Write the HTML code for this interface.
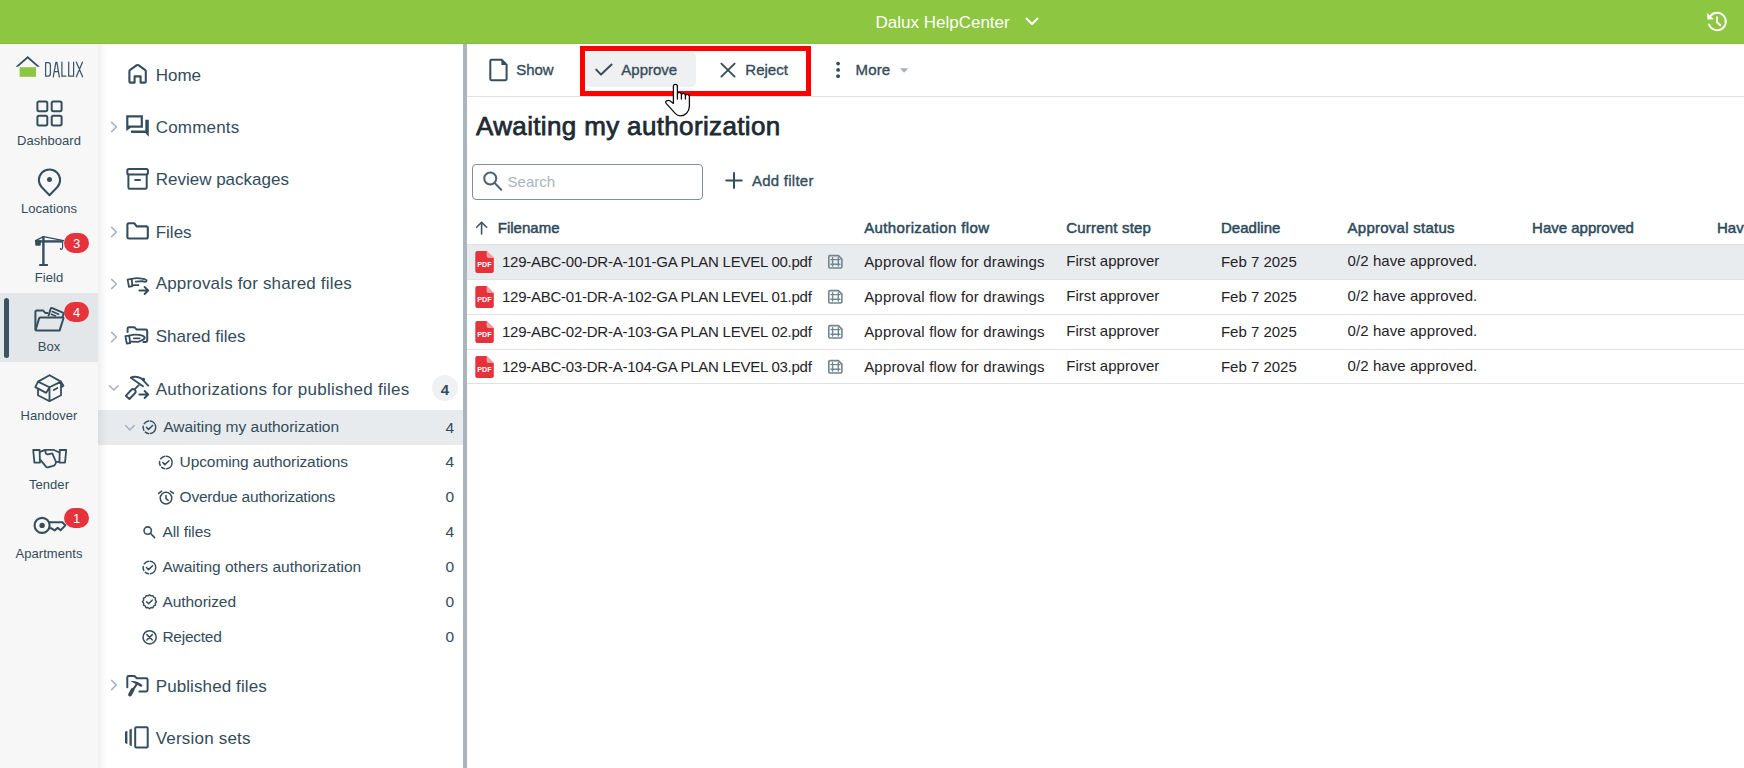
<!DOCTYPE html>
<html><head><meta charset="utf-8"><style>
html,body{margin:0;padding:0;width:1744px;height:768px;overflow:hidden;background:#fff;position:relative;font-family:"Liberation Sans", sans-serif}
.t{position:absolute;white-space:nowrap}
#ic{position:absolute;left:0;top:0}
</style></head><body>
<div style="position:absolute;left:0px;top:0px;width:1744px;height:44px;background:#8dc641"></div>
<div style="position:absolute;left:0px;top:43px;width:1744px;height:1px;background:#88bf3a"></div>
<div class="t" style="left:875.5px;top:13.61px;font-size:17px;line-height:17px;font-weight:400;color:#fff;">Dalux HelpCenter</div>
<div style="position:absolute;left:0px;top:44px;width:98px;height:724px;background:#f7f7f7"></div>
<div style="position:absolute;left:0px;top:293px;width:98px;height:69px;background:#e3e7ea"></div>
<div style="position:absolute;left:4px;top:298px;width:5px;height:59.5px;background:#3a5363;border-radius:2.5px"></div>
<div class="t" style="left:-151px;width:400px;text-align:center;top:134.20px;font-size:13px;line-height:13px;font-weight:400;color:#334c5b;letter-spacing:0.05px;">Dashboard</div>
<div class="t" style="left:-151px;width:400px;text-align:center;top:202.40px;font-size:13px;line-height:13px;font-weight:400;color:#334c5b;letter-spacing:0.05px;">Locations</div>
<div class="t" style="left:-151px;width:400px;text-align:center;top:271.20px;font-size:13px;line-height:13px;font-weight:400;color:#334c5b;letter-spacing:0.05px;">Field</div>
<div class="t" style="left:-151px;width:400px;text-align:center;top:340.30px;font-size:13px;line-height:13px;font-weight:400;color:#334c5b;letter-spacing:0.05px;">Box</div>
<div class="t" style="left:-151px;width:400px;text-align:center;top:408.80px;font-size:13px;line-height:13px;font-weight:400;color:#334c5b;letter-spacing:0.05px;">Handover</div>
<div class="t" style="left:-151px;width:400px;text-align:center;top:477.50px;font-size:13px;line-height:13px;font-weight:400;color:#334c5b;letter-spacing:0.05px;">Tender</div>
<div class="t" style="left:-151px;width:400px;text-align:center;top:546.80px;font-size:13px;line-height:13px;font-weight:400;color:#334c5b;letter-spacing:0.05px;">Apartments</div>
<div style="position:absolute;left:64px;top:233px;width:25px;height:20px;background:#e5323b;border-radius:10px"></div>
<div class="t" style="left:-123.5px;width:400px;text-align:center;top:237.20px;font-size:13px;line-height:13px;font-weight:400;color:#fff;">3</div>
<div style="position:absolute;left:64px;top:302px;width:25px;height:20px;background:#e5323b;border-radius:10px"></div>
<div class="t" style="left:-123.5px;width:400px;text-align:center;top:306.20px;font-size:13px;line-height:13px;font-weight:400;color:#fff;">4</div>
<div style="position:absolute;left:64px;top:508px;width:25px;height:20px;background:#e5323b;border-radius:10px"></div>
<div class="t" style="left:-123.5px;width:400px;text-align:center;top:512.20px;font-size:13px;line-height:13px;font-weight:400;color:#fff;">1</div>
<div style="position:absolute;left:463px;top:44px;width:4px;height:724px;background:#abb5bc"></div>
<div class="t" style="left:155.7px;top:66.51px;font-size:17px;line-height:17px;font-weight:400;color:#334c5b;">Home</div>
<div class="t" style="left:155.7px;top:119.01px;font-size:17px;line-height:17px;font-weight:400;color:#334c5b;letter-spacing:0.2px;">Comments</div>
<div class="t" style="left:155.7px;top:170.91px;font-size:17px;line-height:17px;font-weight:400;color:#334c5b;">Review packages</div>
<div class="t" style="left:155.7px;top:223.51px;font-size:17px;line-height:17px;font-weight:400;color:#334c5b;">Files</div>
<div class="t" style="left:155.7px;top:275.31px;font-size:17px;line-height:17px;font-weight:400;color:#334c5b;letter-spacing:0.17px;">Approvals for shared files</div>
<div class="t" style="left:155.7px;top:328.01px;font-size:17px;line-height:17px;font-weight:400;color:#334c5b;">Shared files</div>
<div class="t" style="left:155.7px;top:380.61px;font-size:17px;line-height:17px;font-weight:400;color:#334c5b;letter-spacing:0.27px;">Authorizations for published files</div>
<div class="t" style="left:155.7px;top:677.61px;font-size:17px;line-height:17px;font-weight:400;color:#334c5b;letter-spacing:0.1px;">Published files</div>
<div class="t" style="left:155.7px;top:730.01px;font-size:17px;line-height:17px;font-weight:400;color:#334c5b;letter-spacing:0.2px;">Version sets</div>
<div style="position:absolute;left:98px;top:410px;width:365px;height:35px;background:#e8ebee"></div>
<div style="position:absolute;left:98px;top:44px;width:9px;height:724px;background:linear-gradient(to right,rgba(0,0,0,0.058),rgba(0,0,0,0))"></div>
<div class="t" style="left:163.2px;top:419.38px;font-size:15.5px;line-height:15.5px;font-weight:400;color:#334c5b;letter-spacing:-0.01999999999999999px;">Awaiting my authorization</div>
<div class="t" style="right:1290px;top:419.58px;font-size:15.5px;line-height:15.5px;font-weight:400;color:#334c5b;">4</div>
<div class="t" style="left:179.6px;top:454.18px;font-size:15.5px;line-height:15.5px;font-weight:400;color:#334c5b;letter-spacing:-0.09999999999999999px;">Upcoming authorizations</div>
<div class="t" style="right:1290px;top:454.38px;font-size:15.5px;line-height:15.5px;font-weight:400;color:#334c5b;">4</div>
<div class="t" style="left:179.6px;top:488.78px;font-size:15.5px;line-height:15.5px;font-weight:400;color:#334c5b;letter-spacing:-0.22px;">Overdue authorizations</div>
<div class="t" style="right:1290px;top:488.98px;font-size:15.5px;line-height:15.5px;font-weight:400;color:#334c5b;">0</div>
<div class="t" style="left:162.4px;top:524.18px;font-size:15.5px;line-height:15.5px;font-weight:400;color:#334c5b;letter-spacing:-0.04999999999999999px;">All files</div>
<div class="t" style="right:1290px;top:524.38px;font-size:15.5px;line-height:15.5px;font-weight:400;color:#334c5b;">4</div>
<div class="t" style="left:162.4px;top:559.18px;font-size:15.5px;line-height:15.5px;font-weight:400;color:#334c5b;">Awaiting others authorization</div>
<div class="t" style="right:1290px;top:559.38px;font-size:15.5px;line-height:15.5px;font-weight:400;color:#334c5b;">0</div>
<div class="t" style="left:162.4px;top:593.68px;font-size:15.5px;line-height:15.5px;font-weight:400;color:#334c5b;letter-spacing:-0.04999999999999999px;">Authorized</div>
<div class="t" style="right:1290px;top:593.88px;font-size:15.5px;line-height:15.5px;font-weight:400;color:#334c5b;">0</div>
<div class="t" style="left:162.4px;top:628.58px;font-size:15.5px;line-height:15.5px;font-weight:400;color:#334c5b;letter-spacing:-0.25px;">Rejected</div>
<div class="t" style="right:1290px;top:628.78px;font-size:15.5px;line-height:15.5px;font-weight:400;color:#334c5b;">0</div>
<div style="position:absolute;left:432px;top:375px;width:26px;height:26px;background:#eff1f3;border-radius:13px"></div>
<div class="t" style="left:245px;width:400px;text-align:center;top:381.80px;font-size:15px;line-height:15px;font-weight:700;color:#334c5b;">4</div>
<div style="position:absolute;left:467px;top:96px;width:1277px;height:1px;background:#dde2e6"></div>
<div style="position:absolute;left:586px;top:52px;width:110px;height:34.5px;background:#eff0f2;border-radius:5px"></div>
<div class="t" style="left:516.3px;top:62.20px;font-size:15px;line-height:15px;font-weight:400;color:#334c5b;letter-spacing:-0.1px;-webkit-text-stroke:0.35px currentColor;">Show</div>
<div class="t" style="left:621.3px;top:62.20px;font-size:15px;line-height:15px;font-weight:400;color:#334c5b;-webkit-text-stroke:0.35px currentColor;">Approve</div>
<div class="t" style="left:745.3px;top:62.20px;font-size:15px;line-height:15px;font-weight:400;color:#334c5b;-webkit-text-stroke:0.35px currentColor;">Reject</div>
<div class="t" style="left:855.6px;top:62.20px;font-size:15px;line-height:15px;font-weight:400;color:#334c5b;letter-spacing:0.1px;-webkit-text-stroke:0.35px currentColor;">More</div>
<div class="t" style="left:476px;top:112.99px;font-size:26px;line-height:26px;font-weight:400;color:#1d2a33;letter-spacing:0.35px;-webkit-text-stroke:0.75px currentColor;">Awaiting my authorization</div>
<div style="position:absolute;left:471.5px;top:163.5px;width:231px;height:36px;border:1px solid #7f909b;border-radius:4px;box-sizing:border-box"></div>
<div class="t" style="left:507.6px;top:174.00px;font-size:15px;line-height:15px;font-weight:400;color:#a9b5be;">Search</div>
<div class="t" style="left:752px;top:173.10px;font-size:15px;line-height:15px;font-weight:400;color:#334c5b;letter-spacing:0.25px;-webkit-text-stroke:0.35px currentColor;">Add filter</div>
<div class="t" style="left:497.8px;top:220.10px;font-size:15px;line-height:15px;font-weight:400;color:#2d4a5c;-webkit-text-stroke:0.5px currentColor;">Filename</div>
<div class="t" style="left:864.2px;top:220.10px;font-size:15px;line-height:15px;font-weight:400;color:#2d4a5c;letter-spacing:0.38px;-webkit-text-stroke:0.5px currentColor;">Authorization flow</div>
<div class="t" style="left:1066.2px;top:220.10px;font-size:15px;line-height:15px;font-weight:400;color:#2d4a5c;letter-spacing:0.2px;-webkit-text-stroke:0.5px currentColor;">Current step</div>
<div class="t" style="left:1220.9px;top:220.10px;font-size:15px;line-height:15px;font-weight:400;color:#2d4a5c;letter-spacing:0.05px;-webkit-text-stroke:0.5px currentColor;">Deadline</div>
<div class="t" style="left:1347.6px;top:220.10px;font-size:15px;line-height:15px;font-weight:400;color:#2d4a5c;letter-spacing:0.25px;-webkit-text-stroke:0.5px currentColor;">Approval status</div>
<div class="t" style="left:1532.1px;top:220.10px;font-size:15px;line-height:15px;font-weight:400;color:#2d4a5c;-webkit-text-stroke:0.5px currentColor;">Have approved</div>
<div class="t" style="left:1717px;top:220.10px;font-size:15px;line-height:15px;font-weight:400;color:#2d4a5c;-webkit-text-stroke:0.5px currentColor;">Hav</div>
<div style="position:absolute;left:467px;top:245px;width:1277px;height:34px;background:#e9ecef"></div>
<div style="position:absolute;left:467px;top:244px;width:1277px;height:1px;background:#dde2e5"></div>
<div style="position:absolute;left:467px;top:279px;width:1277px;height:1px;background:#dde2e5"></div>
<div style="position:absolute;left:467px;top:314px;width:1277px;height:1px;background:#dde2e5"></div>
<div style="position:absolute;left:467px;top:349px;width:1277px;height:1px;background:#dde2e5"></div>
<div style="position:absolute;left:467px;top:383px;width:1277px;height:1px;background:#dde2e5"></div>
<div class="t" style="left:502px;top:254.00px;font-size:15px;line-height:15px;font-weight:400;color:#1f2328;letter-spacing:-0.25px;">129-ABC-00-DR-A-101-GA PLAN LEVEL 00.pdf</div>
<div class="t" style="left:864.2px;top:254.00px;font-size:15px;line-height:15px;font-weight:400;color:#1f2328;letter-spacing:0.18px;">Approval flow for drawings</div>
<div class="t" style="left:1066.2px;top:253.00px;font-size:15px;line-height:15px;font-weight:400;color:#1f2328;letter-spacing:0.05px;">First approver</div>
<div class="t" style="left:1220.9px;top:254.00px;font-size:15px;line-height:15px;font-weight:400;color:#1f2328;">Feb 7 2025</div>
<div class="t" style="left:1347.6px;top:253.00px;font-size:15px;line-height:15px;font-weight:400;color:#1f2328;letter-spacing:0.07px;">0/2 have approved.</div>
<div class="t" style="left:502px;top:289.00px;font-size:15px;line-height:15px;font-weight:400;color:#1f2328;letter-spacing:-0.25px;">129-ABC-01-DR-A-102-GA PLAN LEVEL 01.pdf</div>
<div class="t" style="left:864.2px;top:289.00px;font-size:15px;line-height:15px;font-weight:400;color:#1f2328;letter-spacing:0.18px;">Approval flow for drawings</div>
<div class="t" style="left:1066.2px;top:288.00px;font-size:15px;line-height:15px;font-weight:400;color:#1f2328;letter-spacing:0.05px;">First approver</div>
<div class="t" style="left:1220.9px;top:289.00px;font-size:15px;line-height:15px;font-weight:400;color:#1f2328;">Feb 7 2025</div>
<div class="t" style="left:1347.6px;top:288.00px;font-size:15px;line-height:15px;font-weight:400;color:#1f2328;letter-spacing:0.07px;">0/2 have approved.</div>
<div class="t" style="left:502px;top:324.00px;font-size:15px;line-height:15px;font-weight:400;color:#1f2328;letter-spacing:-0.25px;">129-ABC-02-DR-A-103-GA PLAN LEVEL 02.pdf</div>
<div class="t" style="left:864.2px;top:324.00px;font-size:15px;line-height:15px;font-weight:400;color:#1f2328;letter-spacing:0.18px;">Approval flow for drawings</div>
<div class="t" style="left:1066.2px;top:323.00px;font-size:15px;line-height:15px;font-weight:400;color:#1f2328;letter-spacing:0.05px;">First approver</div>
<div class="t" style="left:1220.9px;top:324.00px;font-size:15px;line-height:15px;font-weight:400;color:#1f2328;">Feb 7 2025</div>
<div class="t" style="left:1347.6px;top:323.00px;font-size:15px;line-height:15px;font-weight:400;color:#1f2328;letter-spacing:0.07px;">0/2 have approved.</div>
<div class="t" style="left:502px;top:359.00px;font-size:15px;line-height:15px;font-weight:400;color:#1f2328;letter-spacing:-0.25px;">129-ABC-03-DR-A-104-GA PLAN LEVEL 03.pdf</div>
<div class="t" style="left:864.2px;top:359.00px;font-size:15px;line-height:15px;font-weight:400;color:#1f2328;letter-spacing:0.18px;">Approval flow for drawings</div>
<div class="t" style="left:1066.2px;top:358.00px;font-size:15px;line-height:15px;font-weight:400;color:#1f2328;letter-spacing:0.05px;">First approver</div>
<div class="t" style="left:1220.9px;top:359.00px;font-size:15px;line-height:15px;font-weight:400;color:#1f2328;">Feb 7 2025</div>
<div class="t" style="left:1347.6px;top:358.00px;font-size:15px;line-height:15px;font-weight:400;color:#1f2328;letter-spacing:0.07px;">0/2 have approved.</div>
<svg id="ic" width="1744" height="768" viewBox="0 0 1744 768">
<path d="M1026.5 18.5 L1032 24 L1037.5 18.5" fill="none" stroke="#fff" stroke-width="2" stroke-linecap="round" stroke-linejoin="round" stroke-linecap="butt"/>
<path d="M1709 24.5 A8.7 8.7 0 1 0 1710.6 15.8" fill="none" stroke="#fff" stroke-width="1.9" stroke-linecap="round" stroke-linejoin="round" stroke-linecap="butt"/>
<path d="M1707.2 13 L1707.4 19.5 L1713.8 19.3 Z" fill="#fff"/>
<path d="M1717 17.2 V22.2 L1720.3 25.3" fill="none" stroke="#fff" stroke-width="1.9" stroke-linecap="round" stroke-linejoin="round" stroke-linecap="butt"/>
<path d="M15.6 66.8 L27.7 56 L39.8 66.8 L37.2 66.8 L27.7 58.6 L18.2 66.8 Z" fill="#354e5e"/>
<path d="M19.6 67.2 H36 V76.8 H19.6 Z" fill="#8dc641"/>
<path d="M45.6 62.6 V76.2 H48.2 Q50.4 76.2 50.4 73.6 V65.2 Q50.4 62.6 48.2 62.6 Z M53.3 76.8 L55.9 62.4 H56.9 L59.3 76.8 M54.3 71.6 H58.4 M61.9 62.2 V76.2 H65.9 M68.7 62.2 V76.2 H73.6 V62.2 M76.4 62.2 L82.6 76.8 M82.4 62.2 L76.4 76.8" fill="none" stroke="#3d5666" stroke-width="1.25" stroke-linecap="round" stroke-linejoin="round" stroke-linecap="butt" stroke-linejoin="miter"/>
<rect x="37.4" y="101.5" width="9.9" height="9.7" rx="1.6" fill="none" stroke="#354e5e" stroke-width="2"/>
<rect x="51.7" y="101.5" width="9.9" height="9.7" rx="1.6" fill="none" stroke="#354e5e" stroke-width="2"/>
<rect x="37.4" y="115.7" width="9.9" height="9.7" rx="1.6" fill="none" stroke="#354e5e" stroke-width="2"/>
<rect x="51.7" y="115.7" width="9.9" height="9.7" rx="1.6" fill="none" stroke="#354e5e" stroke-width="2"/>
<path d="M49.5 195.2 L41.8 187.3 A10.6 10.6 0 1 1 57.2 187.3 Z" fill="none" stroke="#354e5e" stroke-width="2" stroke-linecap="round" stroke-linejoin="round" />
<circle cx="49.5" cy="179.4" r="2.5" fill="#354e5e"/>
<path d="M42.2 236.5 H44.6 V264 H47.9 V266 H39.2 V264 H42.2 Z" fill="#354e5e"/>
<path d="M35.2 240.2 H63.2 V242.6 H35.2 Z" fill="#354e5e"/>
<path d="M35.2 240.2 H40.8 V244.6 Q40.8 245.8 39.6 245.8 H36.4 Q35.2 245.8 35.2 244.6 Z" fill="#354e5e"/>
<path d="M35.6 240.6 L43.4 236.6 L63.6 240.6" fill="none" stroke="#354e5e" stroke-width="1.4" stroke-linecap="round" stroke-linejoin="round" stroke-linecap="butt"/>
<path d="M62.6 242.4 V247.6 Q62.6 249.4 61.3 249.4 Q60.4 249.4 60.4 248.4" fill="none" stroke="#354e5e" stroke-width="1.2" stroke-linecap="round" stroke-linejoin="round" />
<path d="M35.4 329.6 V312 Q35.4 310.5 36.9 310.5 H43.2 L45.2 313 H47.5" fill="none" stroke="#354e5e" stroke-width="2" stroke-linecap="round" stroke-linejoin="round" />
<path d="M36.2 330.6 H59.6 L63.4 318.5 Q63.6 317.4 62.4 317.4 H40.4 Q39.4 317.4 39.1 318.4 L35.6 330" fill="none" stroke="#354e5e" stroke-width="2" stroke-linecap="round" stroke-linejoin="round" />
<path d="M48.6 315.5 L50.6 309 Q51 307.6 52.4 308.2 L62.8 312.6 Q63.8 313.1 63.4 314.2 L62.6 317" fill="none" stroke="#354e5e" stroke-width="2" stroke-linecap="round" stroke-linejoin="round" />
<path d="M52.3 311.6 L58.6 314.3 M51.4 314.2 L55.6 316" fill="none" stroke="#354e5e" stroke-width="1.6" stroke-linecap="round" stroke-linejoin="round" />
<path d="M49.5 375.2 L61 381.6 V395.2 L49.5 401.2 L38 395.2 V388.4 M38 381.6 L49.5 387.3 L61 381.6 M49.5 387.3 V401 M38 381.6 L49.5 375.2 M38 381.6 L35.3 387.1 L46.2 392.9 L49.5 387.3 M61 381.6 L63.4 385.8 L61 387.6 M53.8 390 L57.4 388" fill="none" stroke="#354e5e" stroke-width="1.8" stroke-linecap="round" stroke-linejoin="round" />
<path d="M33.2 450 H39.6 L40 462.6 H34.4 Z M66.2 450 H59.8 L59.4 462.6 H65 Z" fill="none" stroke="#354e5e" stroke-width="1.8" stroke-linecap="round" stroke-linejoin="round" />
<path d="M40 451.8 L45 449.8 H53.4 L58.8 452.2 M45.4 450.4 Q45.4 454.8 48 454.4 L52.3 453.4 L55.6 461 Q56.4 463 55.2 464.4 L54 465.6 L47.8 467.3 Q46.6 467.5 45.8 466.4 L40.6 460.2 M55.8 461.6 L59.2 461.8" fill="none" stroke="#354e5e" stroke-width="1.8" stroke-linecap="round" stroke-linejoin="round" />
<circle cx="42.1" cy="525.4" r="7.5" fill="none" stroke="#354e5e" stroke-width="2.1"/>
<circle cx="42.1" cy="525.4" r="2.7" fill="#354e5e"/>
<path d="M49 522.2 H62.4 L65.4 525.4 L60.6 530.2 L57.7 527.9 L54.6 530.4 L51.1 528.2 H49.2" fill="none" stroke="#354e5e" stroke-width="2" stroke-linecap="round" stroke-linejoin="round" />
<path d="M111.6 122.4 L116.4 127 L111.6 131.6" fill="none" stroke="#a6b1b9" stroke-width="1.5" stroke-linecap="round" stroke-linejoin="round" />
<path d="M111.6 227.4 L116.4 232 L111.6 236.6" fill="none" stroke="#a6b1b9" stroke-width="1.5" stroke-linecap="round" stroke-linejoin="round" />
<path d="M111.6 279.4 L116.4 284 L111.6 288.6" fill="none" stroke="#a6b1b9" stroke-width="1.5" stroke-linecap="round" stroke-linejoin="round" />
<path d="M111.6 332.4 L116.4 337 L111.6 341.6" fill="none" stroke="#a6b1b9" stroke-width="1.5" stroke-linecap="round" stroke-linejoin="round" />
<path d="M111.6 680.4 L116.4 685 L111.6 689.6" fill="none" stroke="#a6b1b9" stroke-width="1.5" stroke-linecap="round" stroke-linejoin="round" />
<path d="M109.4 385.8 L113.8 390 L118.2 385.8" fill="none" stroke="#a6b1b9" stroke-width="1.5" stroke-linecap="round" stroke-linejoin="round" />
<path d="M125.6 425.6 L129.9 430 L134.2 425.6" fill="none" stroke="#a6b1b9" stroke-width="1.5" stroke-linecap="round" stroke-linejoin="round" />
<path d="M129.4 81.4 V71.2 Q129.4 70.4 130.2 69.8 L136.8 65.2 Q137.6 64.8 138.4 65.2 L145 69.8 Q145.8 70.4 145.8 71.2 V81.4 Q145.8 82.6 144.6 82.6 H140.6 V76.4 H134.6 V82.6 H130.6 Q129.4 82.6 129.4 81.4 Z" fill="none" stroke="#354e5e" stroke-width="2.1" stroke-linecap="round" stroke-linejoin="round" stroke-linejoin="miter"/>
<path d="M126.2 115.2 H142.9 V127.8 H130.9 L126.2 131 Z M128.4 117.4 V125.6 H140.7 V117.4 Z" fill="#354e5e"/>
<path d="M145.3 119.8 H148.8 V136.8 L145.3 132.9 H131 V130.4 H145.3 Z" fill="#354e5e"/>
<path d="M128.8 169.1 H146.4 Q147.9 169.1 147.9 170.6 V173 Q147.9 174.5 146.4 174.5 H128.8 Q127.3 174.5 127.3 173 V170.6 Q127.3 169.1 128.8 169.1 Z" fill="none" stroke="#354e5e" stroke-width="2" stroke-linecap="round" stroke-linejoin="round" />
<path d="M128.4 174.6 V187.4 Q128.4 188.8 129.8 188.8 H145.3 Q146.7 188.8 146.7 187.4 V174.6" fill="none" stroke="#354e5e" stroke-width="2" stroke-linecap="round" stroke-linejoin="round" />
<path d="M135.2 180 H140" fill="none" stroke="#354e5e" stroke-width="2" stroke-linecap="round" stroke-linejoin="round" />
<path d="M127.4 237.2 V224.8 Q127.4 223.3 128.9 223.3 H134.4 L136.7 226.4 H146.3 Q147.8 226.4 147.8 227.9 V237 Q147.8 238.5 146.3 238.5 H128.9 Q127.4 238.5 127.4 237.2 Z" fill="none" stroke="#354e5e" stroke-width="2.1" stroke-linecap="round" stroke-linejoin="round" />
<path d="M127.6 279.6 L131.6 278.8 L132.4 286.2 L129 286.8 Z" fill="none" stroke="#354e5e" stroke-width="1.8" stroke-linecap="round" stroke-linejoin="round" />
<path d="M131.6 279 Q136 277.4 141.8 278.6 Q147.6 279.4 146.4 281.4 Q145.2 282.4 142.4 281.2 L135.8 281.6 M132.6 285.2 H138.4" fill="none" stroke="#354e5e" stroke-width="1.8" stroke-linecap="round" stroke-linejoin="round" />
<path d="M139.4 290.5 H148 M144.6 287 L148.2 290.5 L144.6 294" fill="none" stroke="#354e5e" stroke-width="1.9" stroke-linecap="round" stroke-linejoin="round" />
<path d="M127.6 332 V328.6 Q127.6 327.3 128.9 327.3 H134.6 L136.7 329.6 H145.8 Q147.2 329.6 147.2 331 V340.6 Q147.2 342 145.8 342 H143.4" fill="none" stroke="#354e5e" stroke-width="2" stroke-linecap="round" stroke-linejoin="round" />
<path d="M125.4 336.2 L129.2 335.6 L130.2 343 L126.8 343.6 Z" fill="none" stroke="#354e5e" stroke-width="1.8" stroke-linecap="round" stroke-linejoin="round" />
<path d="M129.2 335.6 Q134 334.2 139 334.9 Q143.6 335.6 144.6 337.2 Q145.2 338.6 143.2 339.6 L138.6 341.8 L130.4 341.6 M133.8 338.3 H139.6" fill="none" stroke="#354e5e" stroke-width="1.8" stroke-linecap="round" stroke-linejoin="round" />
<path d="M130.8 377.6 Q136 375.4 141.6 378.6 L148.2 385.6 M130.8 377.8 L143 386.2" fill="none" stroke="#354e5e" stroke-width="1.9" stroke-linecap="round" stroke-linejoin="round" />
<circle cx="143.4" cy="379.4" r="1.7" fill="#354e5e"/>
<path d="M138.8 385.2 L134.8 389.2 M134.4 389.6 Q132.6 388.4 131.2 390 L125.8 395.8 L129.4 399 L135.2 393 Q136.4 391.6 134.8 389.8" fill="none" stroke="#354e5e" stroke-width="1.9" stroke-linecap="round" stroke-linejoin="round" />
<path d="M139.4 394.5 H148 M144.6 391 L148.2 394.5 L144.6 398" fill="none" stroke="#354e5e" stroke-width="1.9" stroke-linecap="round" stroke-linejoin="round" />
<path d="M127.3 687.2 V677.4 Q127.3 676 128.7 676 H134.4 L136.8 678.2 H146.2 Q147.6 678.2 147.6 679.6 V690 Q147.6 691.4 146.2 691.4 H139.4" fill="none" stroke="#354e5e" stroke-width="2" stroke-linecap="round" stroke-linejoin="round" />
<path d="M130.4 681.0 Q134.6 680.6 138.2 682.2 L141.8 684.6 Q142.8 685.4 142 686.4 Q141.2 687.2 140.2 686.6 L136.8 684.6 Q134 683 130.4 681.0 Z" fill="#354e5e"/>
<path d="M137.2 683.6 L132.8 689.8" fill="none" stroke="#354e5e" stroke-width="2.1" stroke-linecap="round" stroke-linejoin="round" stroke-linecap="butt"/>
<path d="M132.6 689.8 L130 694.6" fill="none" stroke="#354e5e" stroke-width="3.8" stroke-linecap="round" stroke-linejoin="round" />
<path d="M136.2 727.3 H146.7 Q147.7 727.3 147.7 728.3 V746.4 Q147.7 747.4 146.7 747.4 H136.2 Q135.2 747.4 135.2 746.4 V728.3 Q135.2 727.3 136.2 727.3 Z" fill="none" stroke="#354e5e" stroke-width="2" stroke-linecap="round" stroke-linejoin="round" />
<path d="M129.5 729.6 Q131.8 728.6 131.8 728.7 V746.2 Q129.5 745.6 129.5 744.6 Z" fill="#354e5e"/>
<path d="M125 731.8 Q127.4 730.8 127.4 730.8 V743.9 Q125 743.4 125 742.4 Z" fill="#354e5e"/>
<path d="M150.28 421.06 A6.3 6.3 0 0 1 150.28 433.54 M148.31 433.50 A6.3 6.3 0 0 1 145.35 432.13 M143.84 430.26 A6.3 6.3 0 0 1 143.20 426.21 M144.30 423.60 A6.3 6.3 0 0 1 148.52 421.06 " fill="none" stroke="#354e5e" stroke-width="1.5" stroke-linecap="round" stroke-linejoin="round" stroke-linecap="butt"/>
<path d="M146.4 427.3 L148.5 429.40000000000003 L152.6 425.5" fill="none" stroke="#354e5e" stroke-width="1.5" stroke-linecap="round" stroke-linejoin="round" />
<path d="M166.68 456.26 A6.3 6.3 0 0 1 166.68 468.74 M164.71 468.70 A6.3 6.3 0 0 1 161.75 467.33 M160.24 465.46 A6.3 6.3 0 0 1 159.60 461.41 M160.70 458.80 A6.3 6.3 0 0 1 164.92 456.26 " fill="none" stroke="#354e5e" stroke-width="1.5" stroke-linecap="round" stroke-linejoin="round" stroke-linecap="butt"/>
<path d="M162.8 462.5 L164.9 464.6 L169.0 460.7" fill="none" stroke="#354e5e" stroke-width="1.5" stroke-linecap="round" stroke-linejoin="round" />
<path d="M150.28 561.26 A6.3 6.3 0 0 1 150.28 573.74 M148.31 573.70 A6.3 6.3 0 0 1 145.35 572.33 M143.84 570.46 A6.3 6.3 0 0 1 143.20 566.41 M144.30 563.80 A6.3 6.3 0 0 1 148.52 561.26 " fill="none" stroke="#354e5e" stroke-width="1.5" stroke-linecap="round" stroke-linejoin="round" stroke-linecap="butt"/>
<path d="M146.4 567.5 L148.5 569.6 L152.6 565.7" fill="none" stroke="#354e5e" stroke-width="1.5" stroke-linecap="round" stroke-linejoin="round" />
<circle cx="166" cy="498.1" r="5.8" fill="none" stroke="#354e5e" stroke-width="1.5"/>
<path d="M166 495.4 V498.6 L168.2 500.4" fill="none" stroke="#354e5e" stroke-width="1.5" stroke-linecap="round" stroke-linejoin="round" />
<path d="M158.6 493.4 L161.6 491.2 M173.4 493.4 L170.4 491.2" fill="none" stroke="#354e5e" stroke-width="1.5" stroke-linecap="round" stroke-linejoin="round" />
<circle cx="147.7" cy="530.6" r="3.7" fill="none" stroke="#354e5e" stroke-width="1.6"/>
<path d="M150.4 533.3 L154.6 537.6" fill="none" stroke="#354e5e" stroke-width="1.6" stroke-linecap="round" stroke-linejoin="round" />
<path d="M149.50 594.70 L151.05 595.90 L153.00 595.64 L153.74 597.46 L155.56 598.20 L155.30 600.15 L156.50 601.70 L155.30 603.25 L155.56 605.20 L153.74 605.94 L153.00 607.76 L151.05 607.50 L149.50 608.70 L147.95 607.50 L146.00 607.76 L145.26 605.94 L143.44 605.20 L143.70 603.25 L142.50 601.70 L143.70 600.15 L143.44 598.20 L145.26 597.46 L146.00 595.64 L147.95 595.90 Z" fill="none" stroke="#354e5e" stroke-width="1.4" stroke-linecap="round" stroke-linejoin="round" />
<path d="M146.6 601.8 L148.6 603.8 L152.4 600" fill="none" stroke="#354e5e" stroke-width="1.5" stroke-linecap="round" stroke-linejoin="round" />
<circle cx="149.6" cy="637.3" r="6.6" fill="none" stroke="#354e5e" stroke-width="1.5"/>
<path d="M146.9 634.6 L152.3 640 M152.3 634.6 L146.9 640" fill="none" stroke="#354e5e" stroke-width="1.5" stroke-linecap="round" stroke-linejoin="round" />
<path d="M491.4 59.8 H501.6 L506.6 64.8 V79.1 Q506.6 80.2 505.5 80.2 H491.4 Q490.3 80.2 490.3 79.1 V60.9 Q490.3 59.8 491.4 59.8 Z" fill="none" stroke="#354e5e" stroke-width="2" stroke-linecap="round" stroke-linejoin="round" stroke-linejoin="round"/>
<path d="M501.4 59.4 L507 65 H501.4 Z" fill="#354e5e"/>
<path d="M596.2 69.6 L601 74.6 L611.6 64.6" fill="none" stroke="#354e5e" stroke-width="2" stroke-linecap="round" stroke-linejoin="round" stroke-linecap="butt"/>
<path d="M721.4 63.6 L734.6 76.6 M734.6 63.6 L721.4 76.6" fill="none" stroke="#354e5e" stroke-width="1.9" stroke-linecap="round" stroke-linejoin="round" stroke-linecap="butt"/>
<circle cx="838.1" cy="63.6" r="1.9" fill="#354e5e"/>
<circle cx="838.1" cy="69.9" r="1.9" fill="#354e5e"/>
<circle cx="838.1" cy="76.2" r="1.9" fill="#354e5e"/>
<path d="M900 68.2 H908.2 L904.1 72.8 Z" fill="#a5b0b8"/>
<circle cx="490.25" cy="178.5" r="6" fill="none" stroke="#4a6170" stroke-width="2"/>
<path d="M494.6 182.9 L501.2 189.8" fill="none" stroke="#4a6170" stroke-width="2" stroke-linecap="round" stroke-linejoin="round" />
<path d="M734 173 V188 M726.2 180.4 H741.8" fill="none" stroke="#354e5e" stroke-width="2" stroke-linecap="round" stroke-linejoin="round" stroke-linecap="butt"/>
<path d="M481.6 234 V222.2 M476.6 227.2 L481.6 222.2 L486.6 227.2" fill="none" stroke="#3d5565" stroke-width="1.6" stroke-linecap="round" stroke-linejoin="round" stroke-linecap="butt"/>
<path d="M477.3 250.9 H486.6 L493.8 258.1 V271 Q493.8 273 491.8 273 H477.3 Q475.3 273 475.3 271 V252.9 Q475.3 250.9 477.3 250.9 Z" fill="#e5323b"/>
<path d="M486.6 250.9 L493.8 258.1 H488.6 Q486.6 258.1 486.6 256.1 Z" fill="#f39ca0"/>
<text x="484.5" y="267.2" font-family="Liberation Sans" font-weight="700" font-size="7.2" fill="#fff" text-anchor="middle">PDF</text>
<path d="M830 255.6 H838.4 L841.9 259.1 V266.8 Q841.9 268 840.7 268 H830 Q828.8 268 828.8 266.8 V256.8 Q828.8 255.6 830 255.6 Z" fill="none" stroke="#71858f" stroke-width="1.6" stroke-linecap="round" stroke-linejoin="round" stroke-linecap="butt" stroke-linejoin="round"/>
<path d="M832.6 257.8 V266 M838.3 257.8 V266 M830.9 259.6 H840 M830.9 264.3 H840" fill="none" stroke="#71858f" stroke-width="1.4" stroke-linecap="round" stroke-linejoin="round" stroke-linecap="butt"/>
<path d="M477.3 285.9 H486.6 L493.8 293.1 V306 Q493.8 308 491.8 308 H477.3 Q475.3 308 475.3 306 V287.9 Q475.3 285.9 477.3 285.9 Z" fill="#e5323b"/>
<path d="M486.6 285.9 L493.8 293.1 H488.6 Q486.6 293.1 486.6 291.1 Z" fill="#f39ca0"/>
<text x="484.5" y="302.2" font-family="Liberation Sans" font-weight="700" font-size="7.2" fill="#fff" text-anchor="middle">PDF</text>
<path d="M830 290.6 H838.4 L841.9 294.1 V301.8 Q841.9 303 840.7 303 H830 Q828.8 303 828.8 301.8 V291.8 Q828.8 290.6 830 290.6 Z" fill="none" stroke="#71858f" stroke-width="1.6" stroke-linecap="round" stroke-linejoin="round" stroke-linecap="butt" stroke-linejoin="round"/>
<path d="M832.6 292.8 V301 M838.3 292.8 V301 M830.9 294.6 H840 M830.9 299.3 H840" fill="none" stroke="#71858f" stroke-width="1.4" stroke-linecap="round" stroke-linejoin="round" stroke-linecap="butt"/>
<path d="M477.3 320.9 H486.6 L493.8 328.1 V341 Q493.8 343 491.8 343 H477.3 Q475.3 343 475.3 341 V322.9 Q475.3 320.9 477.3 320.9 Z" fill="#e5323b"/>
<path d="M486.6 320.9 L493.8 328.1 H488.6 Q486.6 328.1 486.6 326.1 Z" fill="#f39ca0"/>
<text x="484.5" y="337.2" font-family="Liberation Sans" font-weight="700" font-size="7.2" fill="#fff" text-anchor="middle">PDF</text>
<path d="M830 325.6 H838.4 L841.9 329.1 V336.8 Q841.9 338 840.7 338 H830 Q828.8 338 828.8 336.8 V326.8 Q828.8 325.6 830 325.6 Z" fill="none" stroke="#71858f" stroke-width="1.6" stroke-linecap="round" stroke-linejoin="round" stroke-linecap="butt" stroke-linejoin="round"/>
<path d="M832.6 327.8 V336 M838.3 327.8 V336 M830.9 329.6 H840 M830.9 334.3 H840" fill="none" stroke="#71858f" stroke-width="1.4" stroke-linecap="round" stroke-linejoin="round" stroke-linecap="butt"/>
<path d="M477.3 355.9 H486.6 L493.8 363.1 V376 Q493.8 378 491.8 378 H477.3 Q475.3 378 475.3 376 V357.9 Q475.3 355.9 477.3 355.9 Z" fill="#e5323b"/>
<path d="M486.6 355.9 L493.8 363.1 H488.6 Q486.6 363.1 486.6 361.1 Z" fill="#f39ca0"/>
<text x="484.5" y="372.2" font-family="Liberation Sans" font-weight="700" font-size="7.2" fill="#fff" text-anchor="middle">PDF</text>
<path d="M830 360.6 H838.4 L841.9 364.1 V371.8 Q841.9 373 840.7 373 H830 Q828.8 373 828.8 371.8 V361.8 Q828.8 360.6 830 360.6 Z" fill="none" stroke="#71858f" stroke-width="1.6" stroke-linecap="round" stroke-linejoin="round" stroke-linecap="butt" stroke-linejoin="round"/>
<path d="M832.6 362.8 V371 M838.3 362.8 V371 M830.9 364.6 H840 M830.9 369.3 H840" fill="none" stroke="#71858f" stroke-width="1.4" stroke-linecap="round" stroke-linejoin="round" stroke-linecap="butt"/>
</svg>
<div style="position:absolute;left:580px;top:46px;width:231px;height:50px;border:5px solid #f00;box-sizing:border-box"></div>
<svg id="ic2" style="position:absolute;left:0;top:0" width="1744" height="768" viewBox="0 0 1744 768">
<path d="M673.4 103.4 V86.4 Q673.4 84.4 675.4 84.4 Q677.4 84.4 677.4 86.4 V93.2 Q679 92 681.4 94.4 Q683.4 92.4 685.4 95.4 Q687.4 93.6 689.4 96.4 V106 Q689.4 110 686.6 113.2 Q684 115.8 680.4 115.8 Q677.4 115.8 675.2 113.4 L666.2 103.4 Q665 101.6 666.6 100.8 Q668.6 100 670.2 101 Z" fill="#fff"/>
<path d="M673.4 103.4 V86.4 Q673.4 84.4 675.4 84.4 Q677.4 84.4 677.4 86.4 V99 M677.4 94.4 Q677.4 92.4 679.4 92.4 Q681.4 92.4 681.4 94.4 V99 M681.4 95.4 Q681.4 93.4 683.4 93.4 Q685.4 93.4 685.4 95.4 V99 M685.4 96.4 Q685.4 94.4 687.4 94.4 Q689.4 94.4 689.4 96.4 V106 Q689.4 110 686.6 113.2 Q684 115.8 680.4 115.8 Q677.4 115.8 675.2 113.4 L666.2 103.4 Q665 101.6 666.6 100.8 Q668.6 100 670.2 101 L673.4 103.4" fill="none" stroke="#111" stroke-width="1.3" stroke-linecap="round" stroke-linejoin="round" stroke-linecap="butt"/>
</svg>
</body></html>
